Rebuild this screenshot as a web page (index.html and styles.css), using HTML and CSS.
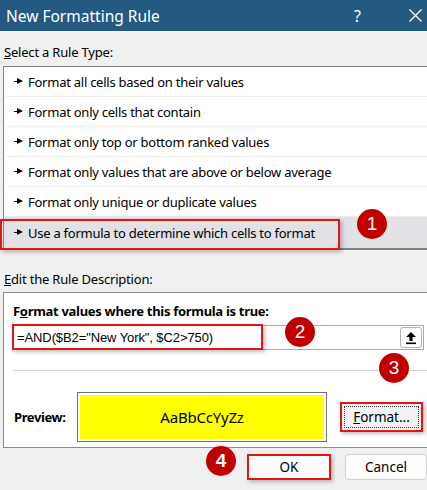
FILE: index.html
```html
<!DOCTYPE html>
<html lang="en">
<head>
    <meta charset="UTF-8">
    <title>New Formatting Rule</title>
    <link rel="stylesheet" href="styles.css">
</head>
<body>
    <div class="dialog">
        <div class="titlebar">
            <span class="title">New Formatting Rule</span>
            <span class="help">?</span>
            <svg class="close" width="13" height="13" viewBox="0 0 13 13">
                <path d="M0.5 0.5 L12.5 12.5 M12.5 0.5 L0.5 12.5" stroke="#fff" stroke-width="1.2" fill="none"/>
            </svg>
        </div>

        <div class="label"><u>S</u>elect a Rule Type:</div>
        <ul class="rule-list">
            <li><i class="arrow"></i>Format all cells based on their values</li>
            <li><i class="arrow"></i>Format only cells that contain</li>
            <li><i class="arrow"></i>Format only top or bottom ranked values</li>
            <li><i class="arrow"></i>Format only values that are above or below average</li>
            <li><i class="arrow"></i>Format only unique or duplicate values</li>
            <li class="selected"><i class="arrow"></i>Use a formula to determine which cells to format</li>
        </ul>

        <div class="label label-edit"><u>E</u>dit the Rule Description:</div>
        <div class="desc-box">
            <div class="desc-title">F<u>o</u>rmat values where this formula is true:</div>
            <div class="formula">
                <span class="formula-text">=AND($B2="New York", $C2&gt;750)</span>
                <button class="ref-btn">
                    <svg width="12" height="14" viewBox="0 0 12 14">
                        <path d="M6 1 L11 6 L7.6 6 L7.6 10 L4.4 10 L4.4 6 L1 6 Z" fill="#000"/>
                        <rect x="1" y="11.5" width="10" height="1.6" fill="#000"/>
                    </svg>
                </button>
            </div>
            <div class="divider"></div>
            <div class="preview-row">
                <span class="preview-label">Preview:</span>
                <div class="preview-box">
                    <div class="preview-fill">AaBbCcYyZz</div>
                </div>
                <button class="format-btn"><span class="focus"><u>F</u>ormat...</span></button>
            </div>
        </div>

        <div class="actions">
            <button class="btn ok">OK</button>
            <button class="btn cancel">Cancel</button>
        </div>

        <!-- annotation marks -->
        <div class="mark mark-rule"></div>
        <div class="mark mark-formula"></div>
        <span class="badge badge-1">1</span>
        <span class="badge badge-2">2</span>
        <span class="badge badge-3">3</span>
        <span class="badge badge-4">4</span>
    </div>
</body>
</html>
```

FILE: styles.css
```css
* {
    margin: 0;
    padding: 0;
    box-sizing: border-box;
}

body {
    font-family: 'Noto Sans', 'Open Sans', sans-serif;
    font-size: 13px;
    color: #000;
    background: #f0f0f0;
    overflow: hidden;
}

.dialog {
    position: relative;
    width: 427px;
    height: 490px;
    overflow: hidden;
    background: #f0f0f0;
}

.titlebar {
    height: 31px;
    background: #245a81;
    color: #fff;
    display: flex;
    align-items: center;
    padding-left: 6px;
}

.title {
    font-size: 15.5px;
}

.help {
    margin-left: auto;
    font-size: 16px;
    margin-right: 48px;
}

.close {
    margin-right: 5px;
}

.label {
    height: 35px;
    padding: 12px 0 0 4px;
    line-height: 18px;
    letter-spacing: -0.2px;
}

.label-edit {
    height: 42px;
    padding-top: 20px;
}

.rule-list {
    list-style: none;
    margin-left: 3px;
    width: 440px;
    height: 184px;
    background: #fff;
    border: 1px solid #828282;
    border-bottom-width: 2px;
    border-right: none;
}

.rule-list li {
    height: 30px;
    margin-left: 2px;
    display: flex;
    align-items: center;
    padding-left: 8px;
    border-bottom: 1px solid #ececec;
    letter-spacing: -0.25px;
}

.rule-list li.selected {
    margin-left: 0;
    padding-left: 10px;
    background: #e1e1e6;
    border-bottom: none;
    height: 31px;
}

.arrow {
    display: inline-block;
    width: 9px;
    height: 7px;
    margin-right: 5px;
    background:
        linear-gradient(#000, #000) 0 3px / 4px 1px no-repeat;
    position: relative;
}

.arrow::after {
    content: "";
    position: absolute;
    left: 3px;
    top: 0;
    border-left: 6px solid #000;
    border-top: 3.5px solid transparent;
    border-bottom: 3.5px solid transparent;
}

.desc-box {
    margin-left: 3px;
    width: 440px;
    height: 156px;
    background: #fff;
    border: 1px solid #8c8c8c;
    border-right: none;
    padding: 9px 0 0 9px;
}

.desc-title {
    font-weight: bold;
    line-height: 18px;
    letter-spacing: -0.3px;
}

.formula {
    margin-top: 5px;
    width: 411px;
    height: 25px;
    border: 1px solid #a9a9a9;
    display: flex;
    align-items: center;
    padding-left: 3px;
    padding-right: 1px;
}

.formula-text {
    font-family: 'Liberation Sans', Arial, sans-serif;
    font-size: 13px;
    letter-spacing: -0.1px;
}

.ref-btn {
    margin-left: auto;
    width: 22px;
    height: 21px;
    background: #fff;
    border: 1px solid #b5b5b5;
    border-radius: 3px;
    display: flex;
    align-items: center;
    justify-content: center;
}

.divider {
    margin-top: 20px;
    height: 1px;
    background: #d3d3d3;
}

.preview-row {
    margin-top: 21px;
    height: 50px;
    display: flex;
    align-items: center;
}

.preview-label {
    width: 64px;
    font-weight: bold;
    padding-left: 1px;
    letter-spacing: -0.4px;
}

.preview-box {
    width: 250px;
    height: 50px;
    border: 1px solid #707070;
    padding: 2px;
    background: #fff;
}

.preview-fill {
    height: 100%;
    background: #ffff00;
    display: flex;
    align-items: center;
    justify-content: center;
    font-size: 15px;
    letter-spacing: -0.2px;
}

.format-btn {
    margin-left: 13px;
    width: 83px;
    height: 30px;
    background: #f3f3f3;
    border: 2px solid #e51414;
    box-shadow: 2px 2px 4px rgba(0, 0, 0, 0.25);
    font-family: inherit;
    font-size: 13.5px;
    padding: 2px;
}

.format-btn .focus {
    display: flex;
    align-items: center;
    justify-content: center;
    height: 100%;
    border: 1px dotted #333;
}

.actions {
    display: flex;
    padding: 6px 0 0 247px;
    gap: 14px;
}

.btn {
    height: 26px;
    font-family: inherit;
    font-size: 13.5px;
    background: #fdfdfd;
    border: 1px solid #d0d0d0;
    border-radius: 4px;
}

.ok {
    width: 86px;
    border: 2px solid #e51414;
    border-radius: 0;
    box-shadow: 2px 2px 4px rgba(0, 0, 0, 0.25);
}

.cancel {
    width: 84px;
}

.mark {
    position: absolute;
    border: 2px solid #e51414;
    box-shadow: 2px 2px 4px rgba(0, 0, 0, 0.25);
}

.mark-rule {
    left: 0;
    top: 219px;
    width: 340px;
    height: 31px;
}

.mark-formula {
    left: 12px;
    top: 324px;
    width: 251px;
    height: 26px;
}

.badge {
    position: absolute;
    width: 30px;
    height: 30px;
    border-radius: 50%;
    background: #c00000;
    color: #fff;
    font-family: 'Liberation Sans', sans-serif;
    font-size: 19px;
    line-height: 30px;
    text-align: center;
}

.badge-1 { left: 357px; top: 209px; }
.badge-2 { left: 285px; top: 317px; }
.badge-3 { left: 379px; top: 353px; }
.badge-4 { left: 206px; top: 446px; font-weight: bold; }
```
